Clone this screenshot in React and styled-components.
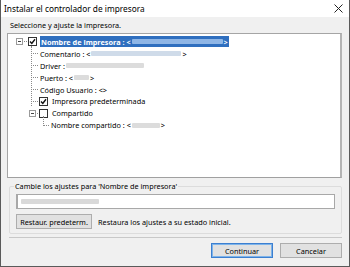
import React from "react";
import styled, { createGlobalStyle } from "styled-components";

const Global = createGlobalStyle`
  html, body { margin: 0; padding: 0; background: #fff; }
  body { font-family: "Noto Sans", "Open Sans", sans-serif; }
`;

const Window = styled.div`
  width: 350px;
  height: 267px;
  box-sizing: border-box;
  border: 1px solid #5a5a5a;
  border-top: none;
  background: #f0f0f0;
  display: flex;
  flex-direction: column;
  font-size: 7.3px;
  color: #000;
`;

const TitleBar = styled.div`
  height: 17px;
  background: #fff;
  display: flex;
  align-items: center;
  justify-content: space-between;
  padding: 0 6px 0 3px;
  font-size: 8.3px;
  flex: none;
`;

const Close = styled.svg`
  width: 9px;
  height: 9px;
`;

const Body = styled.div`
  flex: 1;
  display: flex;
  flex-direction: column;
  padding: 2px 7px 0 6px;
`;

const Label = styled.div`
  height: 12px;
  line-height: 12px;
  padding-left: 3px;
`;

const TreeBox = styled.div`
  margin-top: 2px;
  height: 145px;
  box-sizing: border-box;
  background: #fff;
  border: 1px solid #a5a5a5;
  border-right: 2px solid #b4b4b4;
  border-bottom: 1px solid #a0a0a0;
  padding: 2px 0 0 0;
  display: flex;
  flex-direction: column;
`;

const Row = styled.div`
  height: 11.9px;
  display: flex;
  align-items: center;
  position: relative;
  padding-left: ${(p) => p.$indent}px;
  white-space: nowrap;
`;

const Expander = styled.span`
  width: 5px;
  height: 5px;
  border: 1px solid #9a9a9a;
  background: #fff;
  position: relative;
  margin-right: 1px;
  flex: none;
  &::after {
    content: "";
    position: absolute;
    left: 1px;
    top: 2px;
    width: 3px;
    height: 1px;
    background: #444;
  }
`;

const Dots = styled.span`
  width: ${(p) => p.$w}px;
  border-top: 1px dotted #8a8a8a;
  margin-right: 1px;
  flex: none;
`;

const Check = styled.span`
  width: 7px;
  height: 7px;
  border: 1px solid #333;
  background: #fff;
  margin-right: 3px;
  flex: none;
  display: flex;
  align-items: center;
  justify-content: center;
`;

const ItemText = styled.span`
  display: inline-flex;
  align-items: center;
  height: 11px;
  padding: 0 1px;
  background: ${(p) => (p.$selected ? "#2f6fbf" : "transparent")};
  color: ${(p) => (p.$selected ? "#fff" : "#000")};
  font-weight: ${(p) => (p.$selected ? 700 : 400)};
`;

const Blur = styled.span`
  display: inline-block;
  width: ${(p) => p.$w}px;
  height: 5px;
  margin: 0 1px;
  border-radius: 1px;
  background: ${(p) => p.$c || "#dcdcdc"};
`;

const VLine = styled.span`
  position: absolute;
  left: ${(p) => p.$x}px;
  top: ${(p) => p.$top}px;
  height: ${(p) => p.$h}px;
  border-left: 1px dotted #8a8a8a;
`;

const Group = styled.fieldset`
  margin: 3px 0 0 2px;
  padding: 2px 6px 4px 6px;
  border: 1px solid #dcdcdc;
  border-radius: 2px;
  min-width: 0;
`;

const Legend = styled.legend`
  padding: 0 1px;
  margin-left: -2px;
  line-height: 11px;
`;

const Field = styled.div`
  height: 15px;
  box-sizing: border-box;
  background: #fff;
  border: 1px solid #a8a8a8;
  border-width: 1px 1px 1px 2px;
  display: flex;
  align-items: center;
  padding-left: 2px;
`;

const ActionRow = styled.div`
  margin-top: 5px;
  display: flex;
  align-items: center;
  gap: 6px;
`;

const Button = styled.button`
  font-family: inherit;
  font-size: 7.3px;
  white-space: nowrap;
  height: 15px;
  width: ${(p) => p.$w}px;
  padding: 0;
  box-sizing: border-box;
  background: #e1e1e1;
  border: 1px solid ${(p) => (p.$default ? "#3c7fd0" : "#adadad")};
  box-shadow: ${(p) => (p.$default ? "inset 0 0 0 1px #7eb4ea" : "none")};
  color: #000;
`;

const Separator = styled.div`
  margin: 3px 0 0 2px;
  height: 1px;
  background: #c8c8c8;
`;

const Footer = styled.div`
  display: flex;
  justify-content: flex-end;
  gap: 7px;
  margin-top: 5px;
`;

function Checkbox({ checked }) {
  return (
    <Check>
      {checked && (
        <svg width="7" height="7" viewBox="0 0 7 7">
          <path d="M1 3.5 L2.8 5.4 L6 1.3" fill="none" stroke="#111" strokeWidth="1.4" />
        </svg>
      )}
    </Check>
  );
}

export default function App() {
  return (
    <>
      <Global />
      <Window>
        <TitleBar>
          <span>Instalar el controlador de impresora</span>
          <Close viewBox="0 0 9 9">
            <path d="M0.5 0.5 L8.5 8.5 M8.5 0.5 L0.5 8.5" stroke="#222" strokeWidth="1" />
          </Close>
        </TitleBar>
        <Body>
          <Label>Seleccione y ajuste la impresora.</Label>
          <TreeBox>
            <Row $indent={8}>
              <Expander />
              <Dots $w={3} />
              <Checkbox checked />
              <ItemText $selected>
                Nombre de impresora : &lt;<Blur $w={91} $c="#8fb6e6" />&gt;
              </ItemText>
              <VLine $x={23} $top={10} $h={60} />
            </Row>
            <Row $indent={23}>
              <Dots $w={7} />
              <ItemText>
                Comentario : &lt;<Blur $w={90} $c="#cfdbe9" />&gt;
              </ItemText>
            </Row>
            <Row $indent={23}>
              <Dots $w={7} />
              <ItemText>
                Driver : <Blur $w={78} />
              </ItemText>
            </Row>
            <Row $indent={23}>
              <Dots $w={7} />
              <ItemText>
                Puerto : &lt;<Blur $w={15} />&gt;
              </ItemText>
            </Row>
            <Row $indent={23}>
              <Dots $w={7} />
              <ItemText>Código Usuario : &lt;&gt;</ItemText>
            </Row>
            <Row $indent={23}>
              <Dots $w={7} />
              <Checkbox checked />
              <ItemText>Impresora predeterminada</ItemText>
            </Row>
            <Row $indent={21}>
              <Expander />
              <Dots $w={1} />
              <Checkbox />
              <ItemText>Compartido</ItemText>
              <VLine $x={35} $top={9} $h={8} />
            </Row>
            <Row $indent={35}>
              <Dots $w={6} />
              <ItemText>
                Nombre compartido : &lt;<Blur $w={28} />&gt;
              </ItemText>
            </Row>
          </TreeBox>
          <Group>
            <Legend>Cambie los ajustes para 'Nombre de impresora'</Legend>
            <Field>
              <Blur $w={78} $c="#d9d9d9" />
            </Field>
            <ActionRow>
              <Button $w={76}>Restaur. predeterm.</Button>
              <span>Restaura los ajustes a su estado inicial.</span>
            </ActionRow>
          </Group>
          <Separator />
          <Footer>
            <Button $w={62} $default>Continuar</Button>
            <Button $w={62}>Cancelar</Button>
          </Footer>
        </Body>
      </Window>
    </>
  );
}
